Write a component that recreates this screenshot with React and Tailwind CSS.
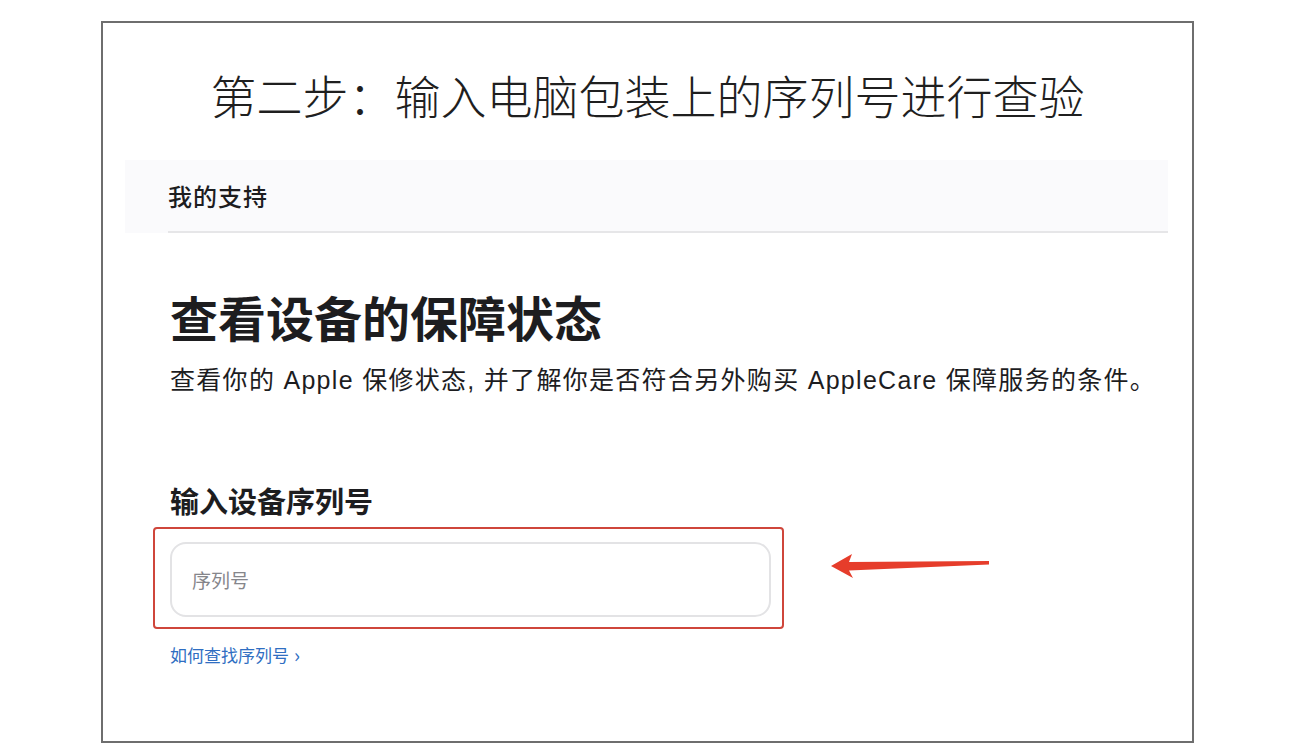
export default function App() {
  const font = { fontFamily: '"Noto Sans CJK SC", "Noto Sans", sans-serif' };
  const mixed = { fontFamily: '"Liberation Sans", "Noto Sans CJK SC", sans-serif' };
  return (
    <div className="w-[1290px] h-[752px] bg-white overflow-hidden" style={font}>
      <div className="ml-[101px] mt-[21px] w-[1093px] h-[722px] border-2 border-[#6e6e6e] flex flex-col">
        <div className="mt-[48px] text-center text-[46px] leading-[46px] font-light text-[#1f1f1f]">
          第二步：输入电脑包装上的序列号进行查验
        </div>
        <div className="mt-[43px] ml-[22px] w-[1043px] h-[73px] bg-[#fafafc]">
          <div className="ml-[43px] h-full border-b-2 border-[#e6e6e8] flex items-center">
            <span className="text-[24px] leading-[24px] font-medium tracking-[1px] text-[#1d1d1f]">我的支持</span>
          </div>
        </div>
        <div className="pl-[67px] flex flex-col">
          <h1 className="mt-[59px] text-[48px] leading-[48px] font-bold text-[#1d1d1f]">查看设备的保障状态</h1>
          <p className="mt-[28px] text-[25px] leading-[25px] tracking-[1.3px] whitespace-nowrap text-[#1d1d1f]" style={mixed}>
            查看你的 Apple 保修状态, 并了解你是否符合另外购买 AppleCare 保障服务的条件。
          </p>
          <h2 className="mt-[93px] text-[29px] leading-[29px] font-semibold text-[#1d1d1f]">输入设备序列号</h2>
        </div>
        <div className="mt-[12px] ml-[50px] flex items-start">
          <div className="w-[631px] h-[102px] border-2 border-[#cf463b] rounded-[4px] pl-[15px] pr-[11px] pt-[13px]">
            <div className="w-[601px] h-[75px] rounded-[16px] border-2 border-[#e3e3e5] flex items-center pl-[20px]">
              <span className="text-[19px] leading-[19px] text-[#86868b]">序列号</span>
            </div>
          </div>
          <svg className="ml-[44px] mt-[24px]" width="164" height="30" viewBox="0 0 164 30">
            <path d="M3 15 L24 3 L21 11 L161 10 L161 13.5 L21 19.5 L25 27 Z" fill="#e63d2b" />
          </svg>
        </div>
        <div className="pl-[67px] mt-[17px] flex items-center">
          <span className="text-[17px] leading-[17px] text-[#2f6ec2]">如何查找序列号</span>
          <span className="ml-[5px] text-[20px] leading-[17px] text-[#2f6ec2]">›</span>
        </div>
      </div>
    </div>
  );
}
